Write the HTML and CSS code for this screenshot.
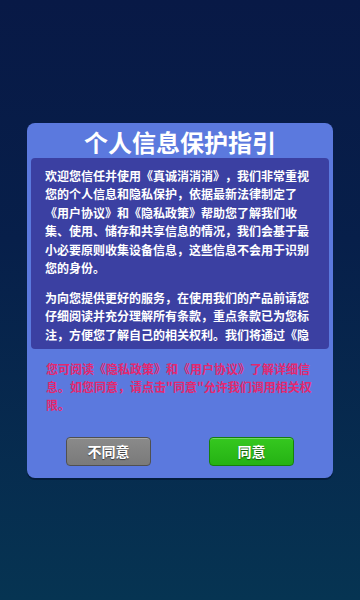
FILE: index.html
```html
<!DOCTYPE html>
<html lang="zh-CN">
<head>
<meta charset="utf-8">
<title>个人信息保护指引</title>
<link rel="stylesheet" href="styles.css">
</head>
<body>
<div class="screen">
  <div class="card">
    <h1 class="title">个人信息保护指引</h1>
    <div class="panel">
      <div class="scroll">
        <p>欢迎您信任并使用《真诚消消消》，我们非常重视您的个人信息和隐私保护，依据最新法律制定了《用户协议》和《隐私政策》帮助您了解我们收集、使用、储存和共享信息的情况，我们会基于最小必要原则收集设备信息，这些信息不会用于识别您的身份。</p>
        <p>为向您提供更好的服务，在使用我们的产品前请您仔细阅读并充分理解所有条款，重点条款已为您标注，方便您了解自己的相关权利。我们将通过《隐私政策》向您说明我们如何收集、使用、存储和保护您的个人信息。</p>
      </div>
    </div>
    <p class="notice">您可阅读《隐私政策》和《用户协议》了解详细信息。如您同意，请点击"同意"允许我们调用相关权限。</p>
    <div class="actions">
      <button class="btn btn-no">不同意</button>
      <button class="btn btn-yes">同意</button>
    </div>
  </div>
</div>
</body>
</html>
```

FILE: styles.css
```css
* { box-sizing: border-box; }
html, body { margin: 0; padding: 0; }
body {
  font-family: "Noto Sans CJK SC", "Noto Sans", sans-serif;
  background: linear-gradient(180deg, #081946 0%, #071f4a 40%, #063452 100%);
  height: 600px;
  overflow: hidden;
  text-spacing-trim: space-all;
  line-break: strict;
}
.screen {
  height: 600px;
  display: flex;
  align-items: center;
  justify-content: center;
}
.card {
  width: 306px;
  background: #5b79de;
  border-radius: 8px;
  padding: 3px 0 12px;
  box-shadow: 0 2px 0 rgba(0, 10, 40, 0.45);
  display: flex;
  flex-direction: column;
}
.title {
  margin: 0;
  height: 32px;
  line-height: 32px;
  font-size: 24px;
  font-weight: 700;
  color: #ffffff;
  text-align: center;
}
.panel {
  margin: 0 4px;
  height: 191px;
  flex: none;
  background: #3b40a2;
  border-radius: 4px;
  padding: 9px 16px 5px 14px;
}
.scroll {
  height: 177px;
  overflow: hidden;
  color: #ffffff;
  font-size: 12px;
  line-height: 18.5px;
  font-weight: 700;
}
.scroll p { margin: 0 0 11px; }
.notice {
  margin: 11px 19px 0;
  width: 266px;
  color: #e4286e;
  font-size: 12px;
  line-height: 18px;
  font-weight: 700;
}
.actions {
  margin-top: 23px;
  display: flex;
  justify-content: center;
  gap: 58px;
}
.btn {
  width: 85px;
  height: 29px;
  border-radius: 4px;
  font-family: inherit;
  font-size: 14px;
  font-weight: 700;
  color: #ffffff;
  padding: 0;
  line-height: 27px;
  text-shadow: 0 1px 1px rgba(0, 0, 0, 0.55);
  cursor: pointer;
}
.btn-no {
  background: linear-gradient(180deg, #8a8a8a 0%, #7a7a7a 100%);
  border: 1px solid #505050;
  box-shadow: inset 0 1px 0 rgba(255,255,255,0.25);
}
.btn-yes {
  background: linear-gradient(180deg, #35c81f 0%, #25b214 100%);
  border: 1px solid #16800c;
  box-shadow: inset 0 1px 0 rgba(255,255,255,0.3);
}
```
